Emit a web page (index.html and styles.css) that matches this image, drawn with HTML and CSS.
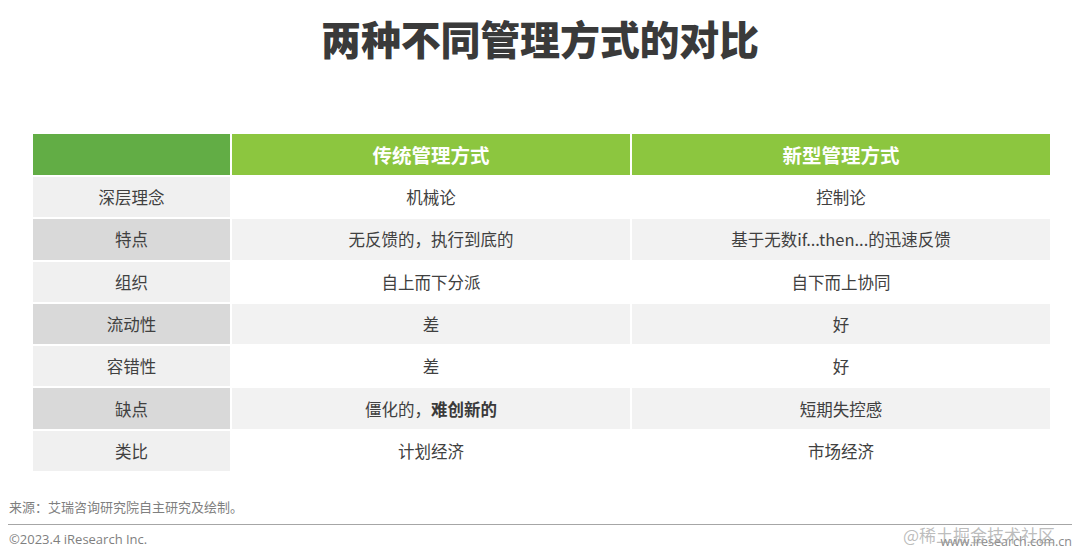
FILE: index.html
```html
<!DOCTYPE html>
<html lang="zh-CN">
<head>
<meta charset="utf-8">
<title>两种不同管理方式的对比</title>
<link rel="stylesheet" href="styles.css">
</head>
<body>
<div class="page">
  <h1 class="title">两种不同管理方式的对比</h1>
  <div class="table">
    <div class="cell head head-first"></div>
    <div class="cell head">传统管理方式</div>
    <div class="cell head">新型管理方式</div>

    <div class="cell label odd">深层理念</div>
    <div class="cell val odd">机械论</div>
    <div class="cell val odd">控制论</div>

    <div class="cell label even">特点</div>
    <div class="cell val even">无反馈的，执行到底的</div>
    <div class="cell val even">基于无数if...then...的迅速反馈</div>

    <div class="cell label odd">组织</div>
    <div class="cell val odd">自上而下分派</div>
    <div class="cell val odd">自下而上协同</div>

    <div class="cell label even">流动性</div>
    <div class="cell val even">差</div>
    <div class="cell val even">好</div>

    <div class="cell label odd">容错性</div>
    <div class="cell val odd">差</div>
    <div class="cell val odd">好</div>

    <div class="cell label even">缺点</div>
    <div class="cell val even">僵化的，<b>难创新的</b></div>
    <div class="cell val even">短期失控感</div>

    <div class="cell label odd">类比</div>
    <div class="cell val odd">计划经济</div>
    <div class="cell val odd">市场经济</div>
  </div>
  <p class="source">来源：艾瑞咨询研究院自主研究及绘制。</p>
  <div class="footer">
    <span class="copy">©2023.4 iResearch Inc.</span>
    <span class="site">www.iresearch.com.cn</span>
    <span class="watermark">@稀土掘金技术社区</span>
  </div>
</div>
</body>
</html>
```
FILE: styles.css
```css
* { box-sizing: border-box; }
html, body {
  margin: 0;
  padding: 0;
  background: #ffffff;
}
body {
  font-family: "Noto Sans CJK SC", "Noto Sans", sans-serif;
  color: #404040;
}
.page {
  width: 1080px;
  height: 560px;
  position: relative;
  overflow: hidden;
}
.title {
  margin: 0;
  padding-top: 14px;
  height: 62px;
  font-size: 40px;
  line-height: 48px;
  font-weight: 900;
  color: #3a3a3a;
  text-align: center;
  letter-spacing: -0.2px;
}
.table {
  margin: 72px 0 0 33px;
  width: 1017px;
  display: grid;
  grid-template-columns: 197px 398px 418px;
  grid-template-rows: 41px repeat(7, 40.3px);
  column-gap: 2px;
  row-gap: 2px;
}
.cell {
  display: flex;
  align-items: center;
  justify-content: center;
  font-size: 16.5px;
  color: #404040;
}
.head {
  background: #8cc63f;
  color: #ffffff;
  font-size: 19.5px;
  font-weight: 700;
}
.head-first { background: #62ad45; }
.label.odd { background: #f0f0f0; }
.label.even { background: #d9d9d9; }
.val.odd { background: #ffffff; }
.val.even { background: #f2f2f2; }
.val b { font-weight: 700; color: #3a3a3a; }
.source {
  margin: 27px 0 0 9px;
  font-size: 13px;
  line-height: 17px;
  color: #7f7f7f;
}
.footer {
  position: relative;
  margin: 9px 8px 0 8px;
  border-top: 1px solid #a6a6a6;
  display: flex;
  justify-content: space-between;
  align-items: flex-start;
  padding-top: 6px;
}
.copy {
  font-family: "Open Sans", "Noto Sans", sans-serif;
  font-size: 13px;
  line-height: 17px;
  color: #7f7f7f;
  padding-left: 1px;
}
.site {
  font-family: "Open Sans", "Noto Sans", sans-serif;
  font-size: 12.5px;
  line-height: 17px;
  color: #8a8a8a;
  margin-top: 2px;
}
.watermark {
  position: absolute;
  left: 895px;
  top: 0px;
  font-size: 17px;
  line-height: 20px;
  color: rgba(160, 160, 160, 0.7);
  white-space: nowrap;
}
```
